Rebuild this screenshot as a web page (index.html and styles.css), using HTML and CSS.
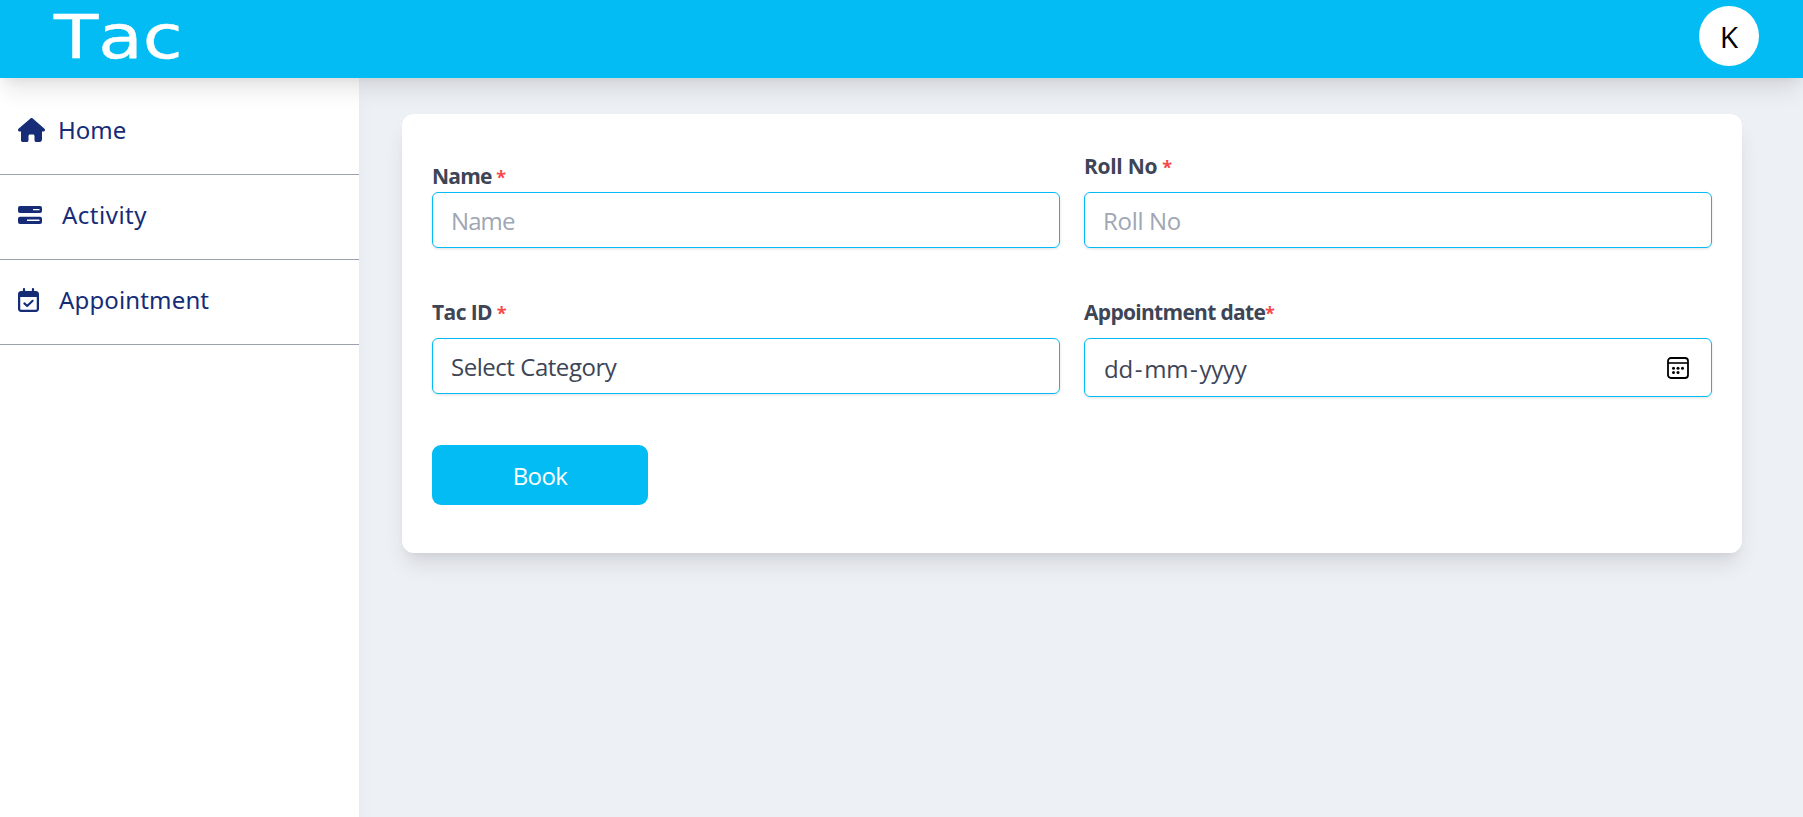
FILE: index.html
```html
<!DOCTYPE html>
<html lang="en">
<head>
<meta charset="utf-8">
<title>Tac</title>
<link rel="stylesheet" href="styles.css">
</head>
<body>
<header class="topbar">
  <div class="brand">Tac</div>
  <div class="avatar">K</div>
</header>
<div class="body">
  <nav class="sidebar">
    <a class="item home">
      <svg width="27" height="24" viewBox="0 0 576 512"><path fill="currentColor" d="M575.800 255.500c0 18-15 32.100-32 32.100l-32 0 .7 160.200c0 35-20 64.200-45 64.200H392c-22.100 0-40-17.900-40-40V384c0-17.700-14.300-32-32-32H256c-17.700 0-32 14.300-32 32v88c0 22.100-17.900 40-40 40H104c-22 0-40-18-40-40V287.600H32c-18 0-32-14-32-32.100 0-9 3-17 10-24L266.400 8c7-7 15-8 22-8s15 2 21 7L564.800 231.500c8 7 12 15 11 24z"/></svg>
      <span>Home</span>
    </a>
    <a class="item activity">
      <svg width="24" height="24" viewBox="0 0 24 24"><path fill="currentColor" fill-rule="evenodd" d="M2 3h20a2 2 0 0 1 2 2v3a2 2 0 0 1-2 2H2a2 2 0 0 1-2-2V5a2 2 0 0 1 2-2zM15 6v1.200h6.500V6zM2 13.700h20a2 2 0 0 1 2 2V19a2 2 0 0 1-2 2H2a2 2 0 0 1-2-2v-3.300a2 2 0 0 1 2-2zM9 16.500V18h12.500v-1.500z"/></svg>
      <span>Activity</span>
    </a>
    <a class="item appointment">
      <svg width="21" height="24" viewBox="0 0 448 512"><path fill="currentColor" fill-rule="evenodd" d="M128 0c13 0 24 11 24 24v40h144V24c0-13 11-24 24-24s24 11 24 24v40h40c35 0 64 29 64 64v320c0 35-29 64-64 64H64c-35 0-64-29-64-64V128c0-35 29-64 64-64h40V24c0-13 11-24 24-24zM400 192H48v256c0 9 7 16 16 16h320c9 0 16-7 16-16z"/><path fill="none" stroke="currentColor" stroke-width="44" stroke-linecap="round" stroke-linejoin="round" d="M136 328l60 56 116-112"/></svg>
      <span>Appointment</span>
    </a>
  </nav>
  <main class="content">
    <form class="card">
      <div class="field">
        <label class="label tight name">Name <b class="req">*</b></label>
        <div class="input muted"><span class="t-name">Name</span></div>
      </div>
      <div class="field">
        <label class="label roll">Roll No <b class="req">*</b></label>
        <div class="input muted"><span class="t-roll">Roll No</span></div>
      </div>
      <div class="field">
        <label class="label tac">Tac ID <b class="req">*</b></label>
        <div class="input"><span class="t-select">Select Category</span></div>
      </div>
      <div class="field">
        <label class="label date">Appointment date<b class="req">*</b></label>
        <div class="input tall"><span class="t-date">dd<i>-</i>mm<i>-</i>yyyy</span>
          <svg width="22" height="22" viewBox="0 0 22 22"><rect x="1" y="1" width="20" height="20" rx="3" fill="none" stroke="#000" stroke-width="1.800"/><path d="M1 6h20" stroke="#000" stroke-width="1.600"/><g fill="#000"><circle cx="6.500" cy="11.200" r="1.500"/><circle cx="11" cy="11.200" r="1.500"/><circle cx="15.500" cy="11.200" r="1.500"/><circle cx="6.500" cy="15.600" r="1.500"/><circle cx="11" cy="15.600" r="1.500"/></g></svg>
        </div>
      </div>
      <button class="book" type="button"><span>Book</span></button>
    </form>
  </main>
</div>
</body>
</html>
```
FILE: styles.css
```css
* { box-sizing: border-box; }
body {
  margin: 0;
  height: 817px;
  overflow: hidden;
  display: flex;
  flex-direction: column;
  background: #edf0f5;
  font-family: "Open Sans", "Noto Sans", sans-serif;
  color: #3d4556;
}
.topbar {
  flex: none;
  height: 78px;
  padding: 0 44px 0 54px;
  display: flex;
  justify-content: space-between;
  background: #02bcf3;
  position: relative;
  z-index: 2;
  box-shadow: 0 15px 22px -4px rgba(0,0,0,.1), 0 6px 9px -3px rgba(0,0,0,.05);
}
.brand {
  font: 60px/70px "DejaVu Sans", sans-serif;
  font-kerning: none;
  color: #fff;
  -webkit-text-stroke: .4px #fff;
  margin-top: 2px;
  transform: scaleX(1.210);
  transform-origin: left;
}
.avatar {
  width: 60px;
  height: 60px;
  margin-top: 6px;
  border-radius: 50%;
  background: #fff;
  color: #000;
  font-size: 30px;
  line-height: 62px;
  text-align: center;
}
.body { flex: 1; display: flex; }
.sidebar {
  width: 359px;
  background: #fff;
  color: #162c77;
  padding-top: 12px;
  box-shadow: 0 15px 22px -4px rgba(0,0,0,.06);
}
.item {
  height: 85px;
  padding: 0 0 4px 18px;
  border-bottom: 1px solid #9ca1ae;
  display: flex;
  align-items: center;
  font: 24px/32px "Noto Sans", sans-serif;
}
.item svg { flex: none; }
.home { gap: 13px; letter-spacing: 0; }
.activity { gap: 20px; letter-spacing: .5px; }
.appointment { gap: 20px; letter-spacing: .15px; }
.content { flex: 1; padding: 36px 61px 0 43px; }
.card {
  height: 439px;
  background: #fff;
  border-radius: 12px;
  padding: 30px;
  display: grid;
  grid-template-columns: 628px 628px;
  grid-template-rows: 134px 167px 60px;
  column-gap: 24px;
  box-shadow: 0 15px 22px -4px rgba(0,0,0,.1), 0 6px 9px -3px rgba(0,0,0,.05);
}
.field { padding-top: 18px; }
.field:nth-child(-n+2) { padding-top: 6px; }
.label {
  display: block;
  height: 42px;
  font-size: 21px;
  line-height: 32px;
  font-weight: 700;
  white-space: pre;
}
.label.tight { padding-top: 10px; }
.name { letter-spacing: -.8px; }
.roll { letter-spacing: -.3px; }
.tac { letter-spacing: -.6px; }
.date { letter-spacing: -.7px; }
.req {
  color: #f84848;
  font-weight: 700;
  font-size: 18px;
}
.input {
  height: 56px;
  border: 1px solid #02bcf3;
  border-radius: 6px;
  padding: 0 22px 0 18px;
  display: flex;
  align-items: center;
  justify-content: space-between;
  font-size: 24px;
  box-shadow: 0 1px 3px rgba(0,0,0,.12);
}
.input.tall { height: 59px; padding-left: 19px; }
.t-name { letter-spacing: -.9px; }
.t-roll { letter-spacing: -.3px; }
.t-select { letter-spacing: -.46px; }
.t-date { padding-top: 1px; letter-spacing: -.3px; }
.t-date i { font-style: normal; padding: 0 2px; }
.muted { color: #a0a6b3; }
.book {
  width: 216px;
  height: 60px;
  border: 0;
  border-radius: 9px;
  background: #02bcf3;
  color: #fff;
  font: 24px "Open Sans", sans-serif;
  letter-spacing: -.6px;
}
```
